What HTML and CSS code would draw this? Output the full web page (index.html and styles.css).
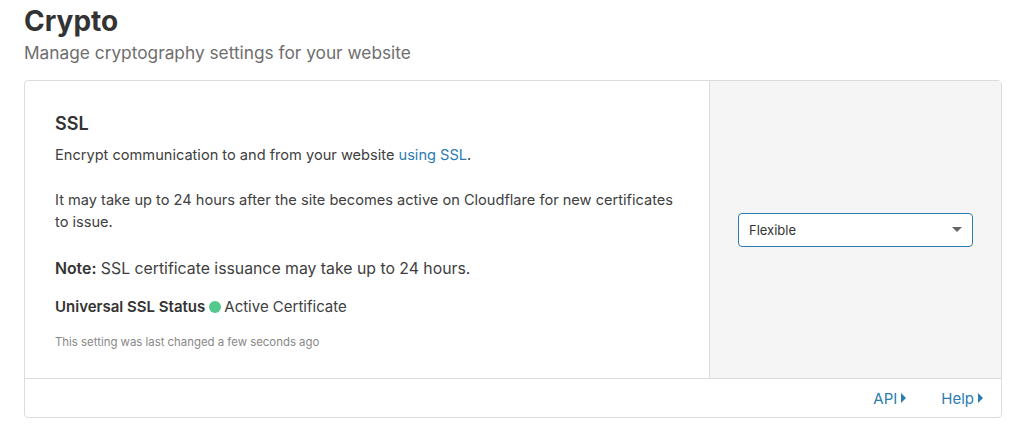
FILE: index.html
```html
<!DOCTYPE html>
<html lang="en">
<head>
    <meta charset="UTF-8">
    <title>Crypto</title>
    <link rel="stylesheet" href="styles.css">
</head>
<body>
    <div class="page">
        <div class="page-header">
            <h1>Crypto</h1>
            <p>Manage cryptography settings for your website</p>
        </div>

        <div class="card">
            <div class="card-body">
                <div class="card-main">
                    <h2>SSL</h2>
                    <p>Encrypt communication to and from your website <a href="#">using SSL</a>.</p>
                    <p class="spaced">It may take up to 24 hours after the site becomes active on Cloudflare for new certificates to issue.</p>
                    <p class="spaced note"><strong>Note:</strong> SSL certificate issuance may take up to 24 hours.</p>
                    <p class="status"><strong>Universal SSL Status</strong> <span class="dot"></span> Active Certificate</p>
                    <p class="changed">This setting was last changed a few seconds ago</p>
                </div>
                <div class="card-control">
                    <div class="select">
                        <span>Flexible</span>
                        <span class="caret"></span>
                    </div>
                </div>
            </div>
            <div class="card-footer">
                <a href="#">API <span class="arrow"></span></a>
                <a href="#">Help <span class="arrow"></span></a>
            </div>
        </div>
    </div>
</body>
</html>
```

FILE: styles.css
```css
* {
    margin: 0;
    padding: 0;
    box-sizing: border-box;
}

body {
    font-family: 'Inter', 'Liberation Sans', Arial, sans-serif;
    background: white;
    color: #333;
}

.page {
    padding: 0 22px 0 24px;
}

.page-header h1 {
    font-size: 28px;
    font-weight: 700;
    line-height: 40px;
    color: #333;
    margin-top: 1px;
}

.page-header p {
    font-size: 17.3px;
    color: #6e6e6e;
    line-height: 22px;
    margin-top: 1px;
}

.card {
    margin-top: 16px;
    border: 1px solid #dcdcdc;
    border-radius: 4px;
}

.card-body {
    display: flex;
    border-bottom: 1px solid #dcdcdc;
    height: 298px;
}

.card-main {
    flex: 1;
    padding: 32px 30px 0 30px;
    font-size: 14.6px;
    color: #404040;
    line-height: 22px;
}

.card-main h2 {
    font-size: 18px;
    font-weight: 600;
    color: #333;
    line-height: 22px;
    margin-bottom: 9px;
}

.card-main a {
    color: #2c7cb0;
    text-decoration: none;
}

.card-main .spaced {
    margin-top: 23px;
}

.card-main .note {
    font-size: 15.8px;
    margin-top: 25px;
}

.card-main strong {
    font-weight: 600;
    color: #333;
}

.card-main .status {
    margin-top: 16px;
    display: flex;
    align-items: center;
    font-size: 15px;
}

.dot {
    display: inline-block;
    width: 12px;
    height: 12px;
    border-radius: 50%;
    background: #54c98c;
    margin: 0 3px 0 4px;
}

.card-main .changed {
    margin-top: 13px;
    font-size: 11.4px;
    color: #888;
}

.card-control {
    width: 292px;
    background: #f5f5f5;
    border-left: 1px solid #dcdcdc;
    display: flex;
    align-items: center;
    padding-left: 28px;
}

.select {
    width: 235px;
    height: 34px;
    background: white;
    border: 1px solid #2c7cb0;
    border-radius: 4px;
    display: flex;
    align-items: center;
    justify-content: space-between;
    padding: 0 10px 0 10px;
    font-size: 13px;
    color: #333;
}

.caret {
    width: 0;
    height: 0;
    border-left: 5px solid transparent;
    border-right: 5px solid transparent;
    border-top: 5px solid #666;
}

.card-footer {
    height: 38px;
    display: flex;
    justify-content: flex-end;
    align-items: center;
    gap: 35px;
    padding-right: 18px;
}

.card-footer a {
    color: #2c7cb0;
    text-decoration: none;
    font-size: 15px;
    display: flex;
    align-items: center;
}

.arrow {
    width: 0;
    height: 0;
    border-top: 5px solid transparent;
    border-bottom: 5px solid transparent;
    border-left: 5px solid #2c7cb0;
    margin-left: 4px;
}
```
